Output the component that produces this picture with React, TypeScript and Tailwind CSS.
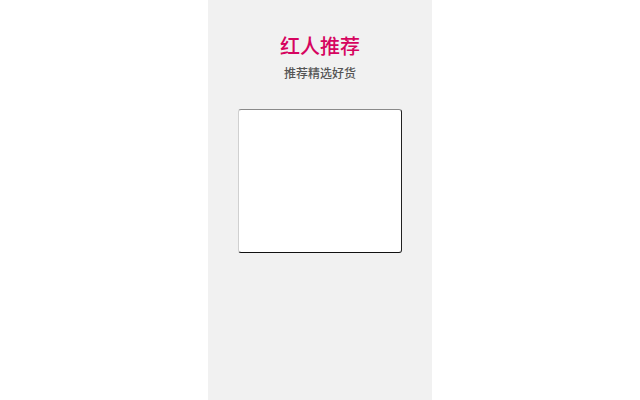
import React from 'react';

export default function App() {
  return (
    <div className="w-[640px] h-[400px] bg-white flex justify-center" style={{ fontFamily: '"Noto Sans CJK SC", "Noto Sans", sans-serif' }}>
      <div className="w-[224px] h-full bg-[#f1f1f1] flex flex-col items-center pt-[32px]">
        <h1 className="text-[20px] leading-[28px] font-medium text-[#d6045f]">红人推荐</h1>
        <p className="mt-[4px] text-[12px] leading-[18px] font-medium text-[#555]">推荐精选好货</p>
        <div className="mt-[27px] w-[164px] h-[144px] bg-white rounded-[3px] border border-t-[#8a8a8a] border-l-[#d0d0d0] border-r-[#222] border-b-[#111]"></div>
      </div>
    </div>
  );
}
